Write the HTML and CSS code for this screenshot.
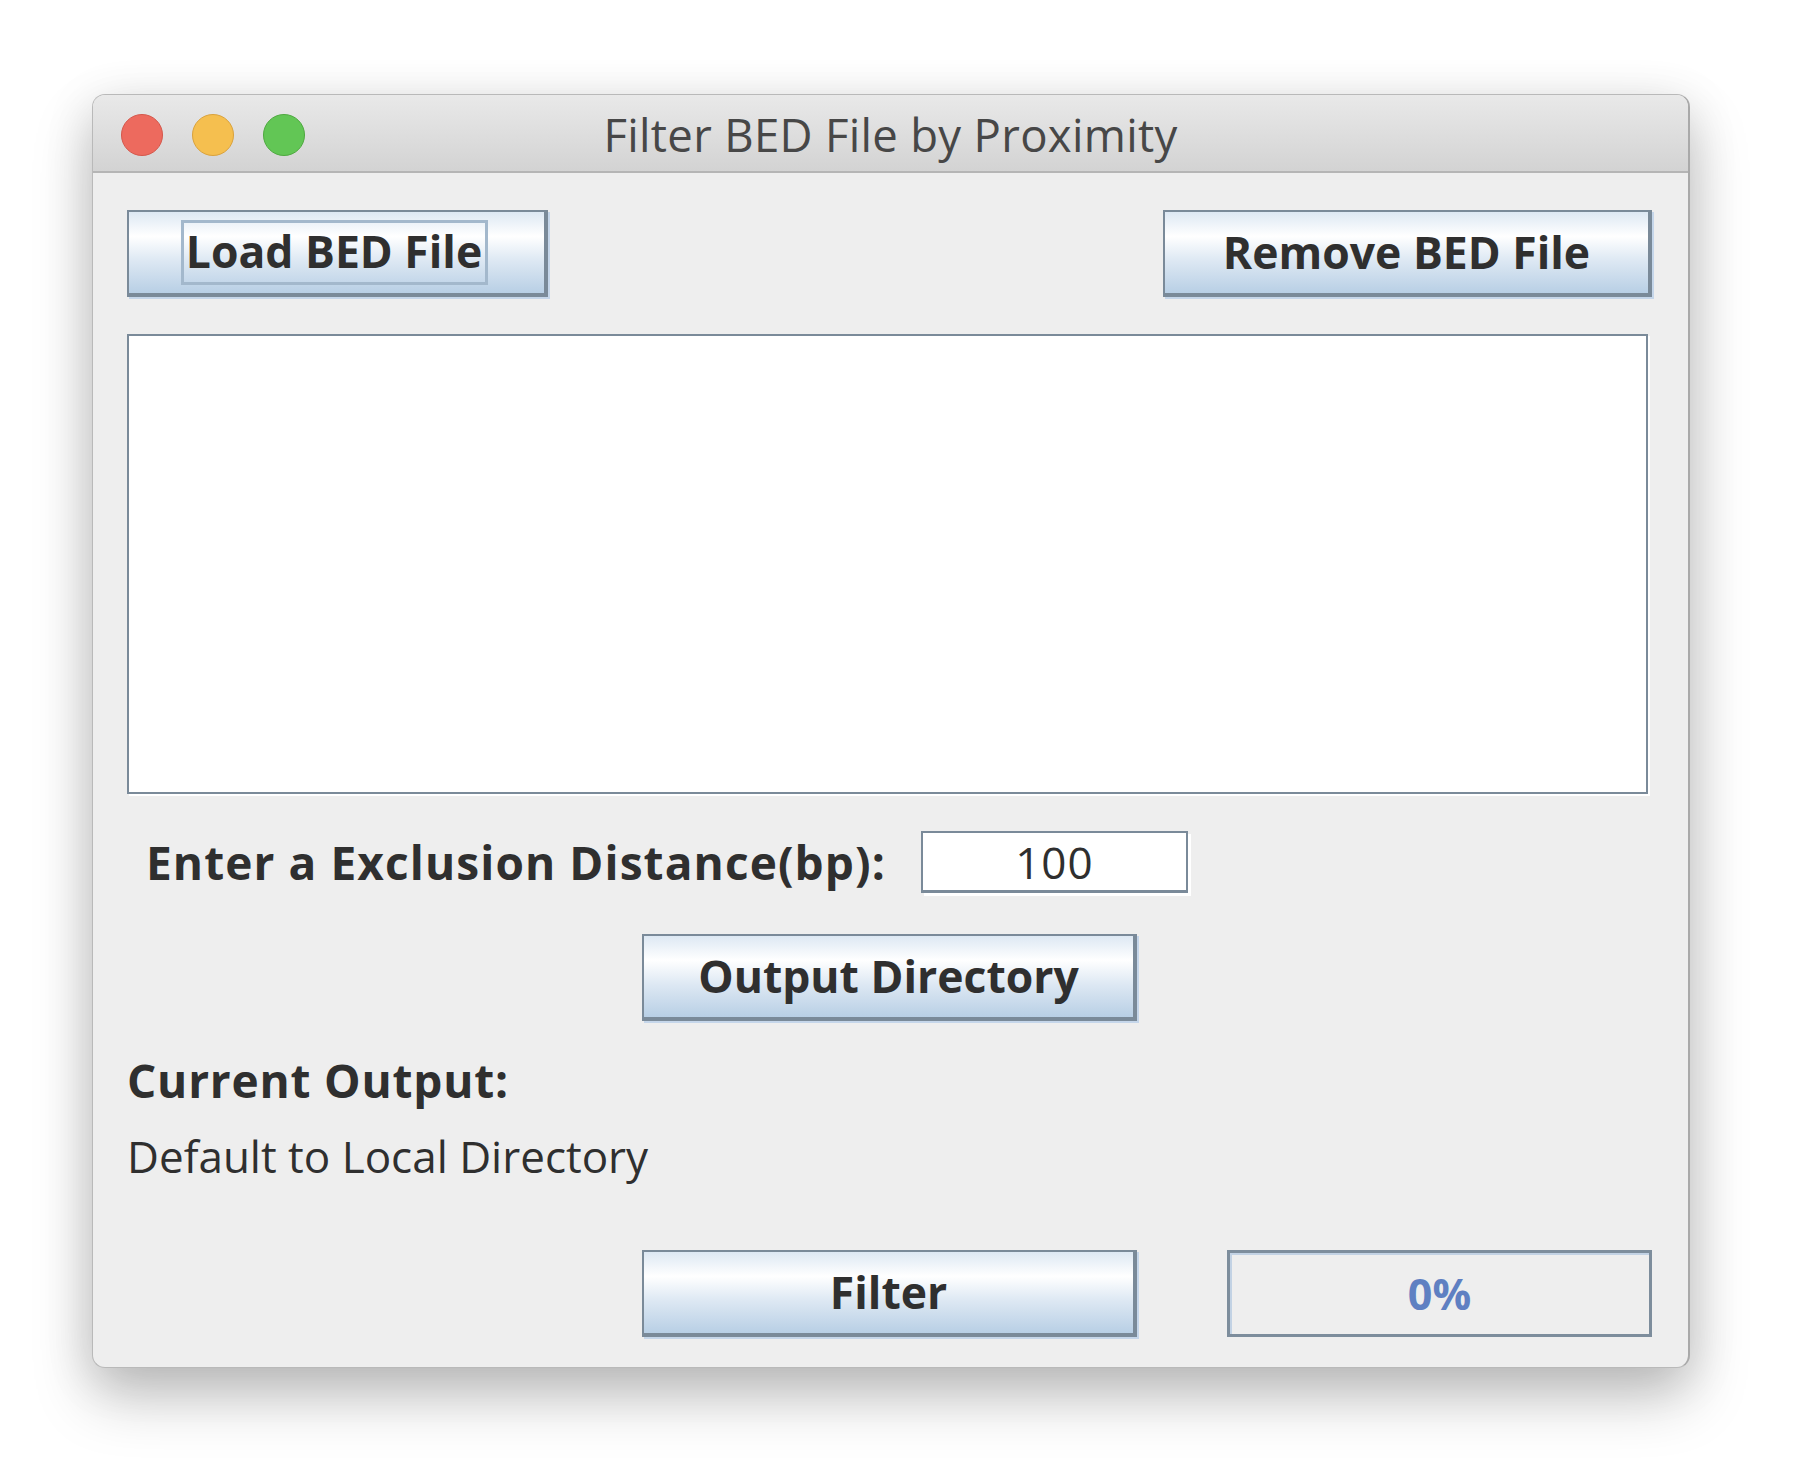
FILE: index.html
```html
<!DOCTYPE html>
<html lang="en">
<head>
<meta charset="utf-8">
<title>Filter BED File by Proximity</title>
<link rel="stylesheet" href="styles.css">
</head>
<body>
<div class="page">
<div class="window">
  <div class="titlebar">
    <div class="lights">
      <span class="light red"></span>
      <span class="light yellow"></span>
      <span class="light green"></span>
    </div>
    <div class="title">Filter BED File by Proximity</div>
    <div></div>
  </div>
  <div class="content">
    <div class="row-top">
      <button class="btn btn-load"><span class="focus">Load BED File</span></button>
      <button class="btn btn-remove">Remove BED File</button>
    </div>
    <div class="list"></div>
    <div class="row-distance">
      <span class="label">Enter a Exclusion Distance(bp):</span>
      <div class="field">100</div>
    </div>
    <div class="row-center">
      <button class="btn btn-output">Output Directory</button>
    </div>
    <div class="heading">Current Output:</div>
    <div class="path">Default to Local Directory</div>
    <div class="row-bottom">
      <button class="btn btn-filter">Filter</button>
      <div class="progress">0%</div>
    </div>
  </div>
</div>
</div>
</body>
</html>
```

FILE: styles.css
```css
* { box-sizing: border-box; }

html, body {
  margin: 0;
  background: #ffffff;
}

body {
  font-family: "Open Sans", "DejaVu Sans", sans-serif;
  color: #2f2f2f;
}

.page {
  min-height: 1478px;
  padding: 94px 0 0 92px;
}

.window {
  width: 1598px;
  height: 1274px;
  background: #eeeeee;
  border: 1px solid #b9b9b9;
  border-right: 2px solid #a9a9a9;
  border-radius: 13px;
  overflow: hidden;
  box-shadow: 0 30px 60px rgba(0, 0, 0, 0.22), 0 10px 50px rgba(0, 0, 0, 0.12);
}

.titlebar {
  height: 78px;
  padding-top: 4px;
  display: grid;
  grid-template-columns: 1fr auto 1fr;
  align-items: center;
  background: linear-gradient(#e9e9e9, #d3d3d3);
  border-bottom: 2px solid #b5b5b5;
}

.lights {
  display: flex;
  gap: 29px;
  padding-left: 28px;
}

.light {
  width: 42px;
  height: 42px;
  border-radius: 50%;
  display: block;
}
.red { background: #ed6a5e; border: 1px solid #d5574b; }
.yellow { background: #f5bf4f; border: 1px solid #daa23b; }
.green { background: #62c655; border: 1px solid #4ea93f; }

.title {
  font-size: 45.5px;
  color: #474747;
  line-height: 1;
  letter-spacing: 0.3px;
}

.content {
  padding: 37px 0 0 34px;
}

.btn {
  font-family: "Open Sans", "DejaVu Sans", sans-serif;
  font-weight: 700;
  font-size: 44.5px;
  color: #2f2f2f;
  height: 87px;
  padding: 0;
  border: 2px solid #7a8a99;
  border-right-width: 4px;
  border-bottom-width: 4px;
  background: linear-gradient(#dde8f3 0%, #ffffff 30%, #dde8f3 60%, #b8cfe5 100%);
  box-shadow: 2px 2px 0 #c5d6ea;
  display: flex;
  align-items: center;
  justify-content: center;
  line-height: 1;
}

.row-top {
  width: 1525px;
  display: flex;
  justify-content: space-between;
}

.btn-load { width: 421px; }
.btn-remove { width: 489px; }

.focus {
  border: 3px solid #a3b8cc;
  padding: 6px 3px 8px 2px;
  margin-left: -4px;
}

.list {
  margin-top: 37px;
  width: 1521px;
  height: 460px;
  background: #ffffff;
  border: 2px solid #7a8a99;
  box-shadow: 2px 2px 0 #ffffff;
}

.row-distance {
  margin-top: 37px;
  display: flex;
  align-items: center;
  gap: 35px;
  padding-left: 19px;
}

.label {
  font-weight: 700;
  font-size: 46px;
  letter-spacing: 1.1px;
  line-height: 1;
}

.field {
  width: 267px;
  height: 62px;
  background: #ffffff;
  border: 2px solid #7a8a99;
  border-bottom-width: 3px;
  box-shadow: 3px 3px 0 #ffffff;
  font-size: 44px;
  letter-spacing: 1px;
  display: flex;
  align-items: center;
  justify-content: center;
  line-height: 1;
}

.row-center {
  margin-top: 41px;
  width: 1525px;
  display: flex;
  justify-content: center;
}

.btn-output { width: 495px; }

.heading {
  margin-top: 31px;
  font-weight: 700;
  font-size: 46px;
  letter-spacing: 0.8px;
  line-height: 56px;
}

.path {
  margin-top: 20px;
  font-size: 44px;
  line-height: 56px;
}

.row-bottom {
  margin-top: 66px;
  display: flex;
  padding-left: 515px;
  gap: 90px;
}

.btn-filter { width: 495px; }

.progress {
  width: 425px;
  height: 87px;
  border: 3px solid #7d8d9c;
  box-shadow: inset 2px 2px 0 #c2d2e4;
  background: #eeeeee;
  color: #5f80c2;
  font-weight: 700;
  font-size: 43px;
  display: flex;
  align-items: center;
  justify-content: center;
  line-height: 1;
}
```
